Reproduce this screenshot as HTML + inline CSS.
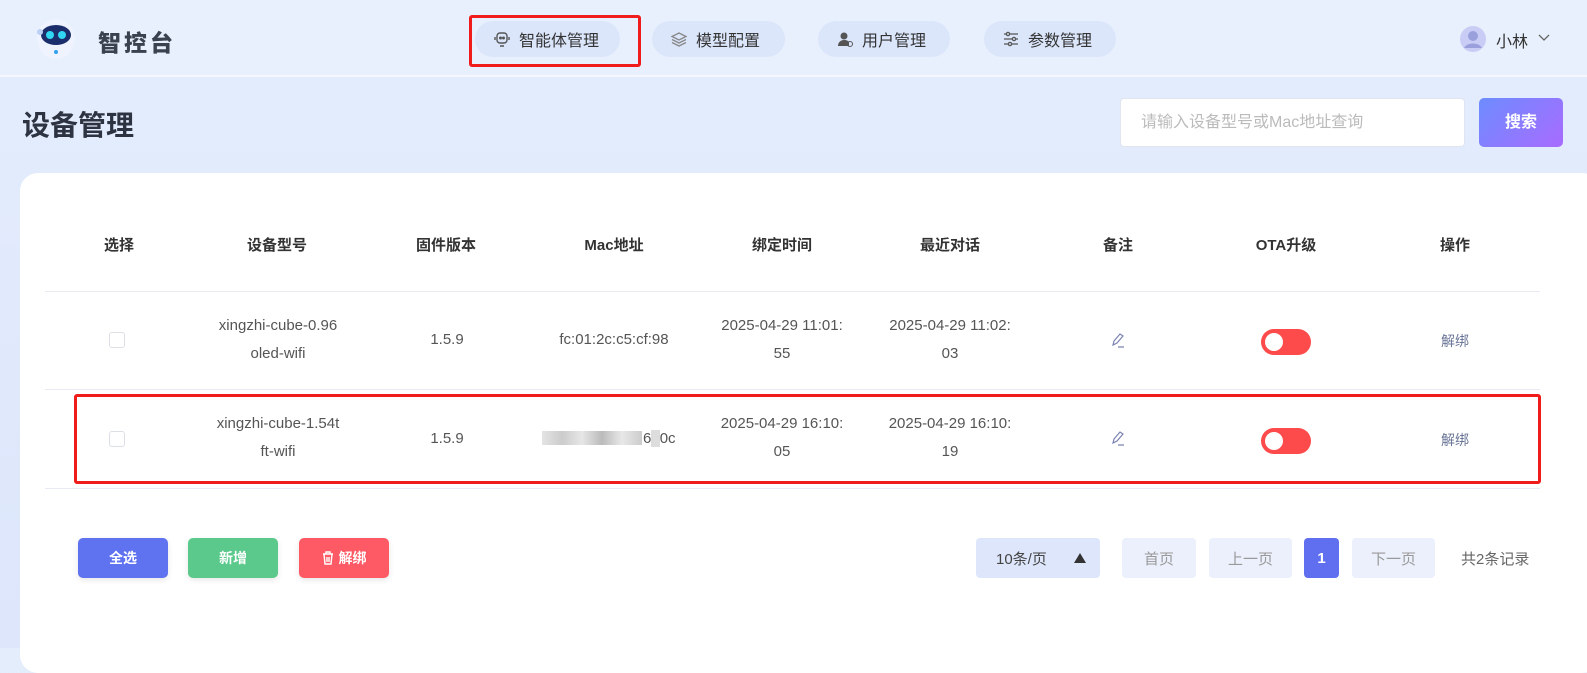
<!DOCTYPE html>
<html><head><meta charset="utf-8"><style>
*{margin:0;padding:0;box-sizing:border-box}
body{width:1587px;height:648px;overflow:hidden;font-family:"Liberation Sans","Noto Sans CJK SC",sans-serif;background:linear-gradient(180deg,#e4edfc,#dde6fb);position:relative;color:#333}
.abs{position:absolute}
.hdr{left:0;top:0;width:1587px;height:77px;background:#e8f0fd;border-bottom:2px solid #f4f7fe}
.nav{top:21px;height:36px;border-radius:18px;background:#dbe6fb;font-size:16px;color:#333;display:flex;align-items:center;padding:0 18px;gap:8px}
.c{position:absolute;text-align:center;transform:translateX(-50%);white-space:nowrap}
.th{top:234px;font-size:15px;font-weight:bold;color:#333}
.td{font-size:15px;color:#555;line-height:28px}
.hl{left:45px;width:1495px;height:1px;background:#e8ebf3}
.cb{width:16px;height:16px;border:1px solid #dcdfe6;border-radius:3px;background:#fff}
.sw{width:50px;height:26px;border-radius:13px;background:#fd4a4a}
.sw:after{content:"";position:absolute;left:4px;top:4px;width:18px;height:18px;border-radius:50%;background:#fff}
.btn{top:538px;height:40px;width:90px;border-radius:5px;color:#fff;font-size:14px;font-weight:bold;display:flex;align-items:center;justify-content:center;gap:5px;box-shadow:0 2px 6px rgba(0,0,0,.1)}
.pg{top:538px;height:40px;border-radius:4px;background:#ebf0fc;color:#999;font-size:15px;display:flex;align-items:center;justify-content:center}
.op{font-size:14px;color:#6a7597}
</style></head><body>
<div class="abs hdr"></div>
<svg class="abs" style="left:30px;top:12px" width="52" height="52" viewBox="0 0 52 52"><ellipse cx="26" cy="27" rx="19" ry="20" fill="#eef3ff"/><ellipse cx="26" cy="23" rx="15" ry="10" fill="#1b2e6b"/><circle cx="20" cy="23" r="4" fill="#31d6f2"/><circle cx="32" cy="23" r="4" fill="#31d6f2"/><circle cx="26" cy="40" r="2" fill="#31a0f2"/><circle cx="10" cy="20" r="3" fill="#bcd0f5"/></svg>
<div class="abs" style="left:98px;top:24px;font-size:23px;font-weight:900;color:#3a4250;letter-spacing:3px">智控台</div>
<div class="abs nav" style="left:475px;width:145px"><svg width="18" height="18" viewBox="0 0 18 18" fill="none" stroke="#555" stroke-width="1.4"><rect x="4" y="3" width="10" height="10" rx="3"/><circle cx="7.5" cy="8" r=".8" fill="#555"/><circle cx="10.5" cy="8" r=".8" fill="#555"/><path d="M7 16h4M2 7v3M16 7v3"/></svg>智能体管理</div>
<div class="abs" style="left:469px;top:15px;width:172px;height:52px;border:3px solid #f01b1b;border-radius:3px"></div>
<div class="abs nav" style="left:652px;width:133px"><svg width="18" height="18" viewBox="0 0 18 18" fill="none" stroke="#888" stroke-width="1.3"><path d="M9 3l7 3.5-7 3.5-7-3.5z M2 9.5l7 3.5 7-3.5 M2 12.5l7 3.5 7-3.5"/></svg>模型配置</div>
<div class="abs nav" style="left:818px;width:132px"><svg width="18" height="18" viewBox="0 0 18 18" fill="#555"><circle cx="8" cy="6" r="3.5"/><path d="M2 16c0-4 3-6 6-6s4 1 5 2v4z"/><circle cx="14" cy="14" r="2.5" fill="none" stroke="#555"/></svg>用户管理</div>
<div class="abs nav" style="left:984px;width:132px"><svg width="18" height="18" viewBox="0 0 18 18" fill="none" stroke="#555" stroke-width="1.3"><path d="M2 4h14M2 9h14M2 14h14"/><circle cx="6" cy="4" r="1.6" fill="#dbe6fb"/><circle cx="12" cy="9" r="1.6" fill="#dbe6fb"/><circle cx="8" cy="14" r="1.6" fill="#dbe6fb"/></svg>参数管理</div>
<svg class="abs" style="left:1460px;top:26px" width="26" height="26" viewBox="0 0 26 26"><circle cx="13" cy="13" r="13" fill="#c9cdf5"/><circle cx="13" cy="10" r="5" fill="#9aa0dc"/><path d="M4 22c3-6 15-6 18 0" fill="#9aa0dc"/></svg>
<div class="abs" style="left:1496px;top:28px;font-size:16px;color:#333">小林</div>
<svg class="abs" style="left:1537px;top:32px" width="14" height="10" viewBox="0 0 14 10"><path d="M2 3l5 5 5-5" stroke="#666" fill="none" stroke-width="1.3"/></svg>
<div class="abs" style="left:22px;top:104px;font-size:28px;font-weight:bold;color:#2d3340">设备管理</div>
<div class="abs" style="left:1120px;top:98px;width:345px;height:49px;background:#fff;border:1px solid #e0e5ef;border-radius:4px;padding-left:20px;line-height:47px;font-size:16px;color:#bbb">请输入设备型号或Mac地址查询</div>
<div class="abs" style="left:1479px;top:98px;width:84px;height:49px;border-radius:5px;background:linear-gradient(135deg,#6d8cff,#a86bff);color:#fff;font-size:16px;font-weight:bold;text-align:center;line-height:49px">搜索</div>
<div class="abs" style="left:20px;top:173px;width:1580px;height:500px;background:#fff;border-radius:18px"></div>
<div class="c th" style="left:119px">选择</div><div class="c th" style="left:277px">设备型号</div><div class="c th" style="left:446px">固件版本</div><div class="c th" style="left:614px">Mac地址</div><div class="c th" style="left:782px">绑定时间</div><div class="c th" style="left:950px">最近对话</div><div class="c th" style="left:1118px">备注</div><div class="c th" style="left:1286px">OTA升级</div><div class="c th" style="left:1455px">操作</div>
<div class="abs hl" style="top:291px"></div><div class="abs hl" style="top:389px"></div><div class="abs hl" style="top:488px"></div>
<div class="abs cb" style="left:109px;top:332px"></div>
<div class="c td" style="left:278px;top:312px">xingzhi-cube-0.96<br>oled-wifi</div>
<div class="c td" style="left:447px;top:326px">1.5.9</div>
<div class="c td" style="left:614px;top:326px">fc:01:2c:c5:cf:98</div>
<div class="c td" style="left:782px;top:312px">2025-04-29 11:01:<br>55</div>
<div class="c td" style="left:950px;top:312px">2025-04-29 11:02:<br>03</div>
<svg class="abs" style="left:1110px;top:331px" width="18" height="18" viewBox="0 0 18 18" fill="none" stroke="#7a82b0" stroke-width="1.2"><path d="M3 14l1-4 6-7 3 2-6 7z M8 16h6"/></svg>
<div class="abs sw" style="left:1261px;top:329px"></div>
<div class="c op" style="left:1455px;top:331px">解绑</div>
<div class="abs cb" style="left:109px;top:431px"></div>
<div class="c td" style="left:278px;top:410px">xingzhi-cube-1.54t<br>ft-wifi</div>
<div class="c td" style="left:447px;top:425px">1.5.9</div>
<div class="abs" style="left:542px;top:431px;width:100px;height:14px;background:linear-gradient(90deg,#e4e4e4,#ccc 20%,#e6e6e6 40%,#bbb 60%,#e8e8e8 80%,#ccc)"></div>
<div class="abs td" style="left:643px;top:425px">6<span style="background:#ddd;color:transparent">_</span>0c</div>
<div class="c td" style="left:782px;top:410px">2025-04-29 16:10:<br>05</div>
<div class="c td" style="left:950px;top:410px">2025-04-29 16:10:<br>19</div>
<svg class="abs" style="left:1110px;top:429px" width="18" height="18" viewBox="0 0 18 18" fill="none" stroke="#7a82b0" stroke-width="1.2"><path d="M3 14l1-4 6-7 3 2-6 7z M8 16h6"/></svg>
<div class="abs sw" style="left:1261px;top:428px"></div>
<div class="c op" style="left:1455px;top:430px">解绑</div>
<div class="abs" style="left:74px;top:394px;width:1467px;height:90px;border:3px solid #f01b1b;border-radius:3px"></div>
<div class="abs btn" style="left:78px;background:#5f72f0">全选</div>
<div class="abs btn" style="left:188px;background:#5ac98b">新增</div>
<div class="abs btn" style="left:299px;background:#fd5a66"><svg width="12" height="14" viewBox="0 0 12 14" fill="none" stroke="#fff" stroke-width="1.4"><path d="M1 3h10M4 3V1h4v2M2 3l1 10h6l1-10M5 6v5M7 6v5"/></svg>解绑</div>
<div class="abs pg" style="left:976px;width:124px;background:#dde6fb;color:#444;justify-content:space-between;padding:0 14px 0 20px">10条/页<svg width="12" height="10"><path d="M0 10L6 0l6 10z" fill="#333"/></svg></div>
<div class="abs pg" style="left:1122px;width:74px">首页</div>
<div class="abs pg" style="left:1209px;width:83px">上一页</div>
<div class="abs pg" style="left:1304px;width:35px;background:#5f6ff0;color:#fff;font-weight:bold">1</div>
<div class="abs pg" style="left:1352px;width:83px">下一页</div>
<div class="abs" style="left:1461px;top:548px;font-size:15px;color:#666">共2条记录</div>
</body></html>
